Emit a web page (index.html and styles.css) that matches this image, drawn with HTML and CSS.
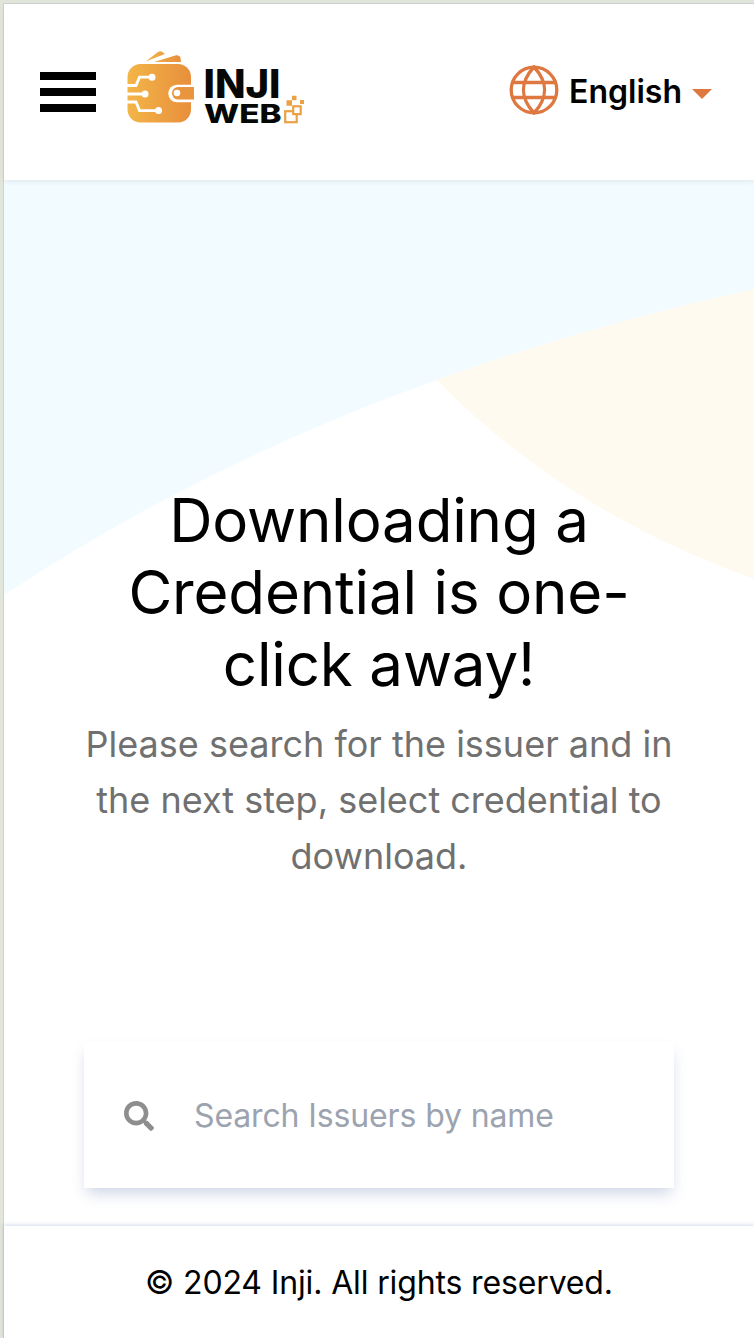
FILE: index.html
```html
<!DOCTYPE html>
<html lang="en">
<head>
<meta charset="utf-8">
<title>Inji Web</title>
<link rel="stylesheet" href="styles.css">
</head>
<body>
<div class="app">
  <header class="header">
    <button class="menu" aria-label="Menu"><span></span><span></span><span></span></button>
    <svg class="logo" width="180" height="84" viewBox="126 50 180 84" role="img" aria-label="Inji Web">
      <defs>
        <linearGradient id="wallet" x1="0" x2="1"><stop offset="0" stop-color="#f3b548"/><stop offset="1" stop-color="#e88f3c"/></linearGradient>
      </defs>
      <path d="M145.500 61.500 158 52q2-1.500 4-.3l3 2.300zM154 62l22-6.700q3.500-.7 4.500 2.500l.5 4.200z" fill="url(#wallet)"/>
      <rect x="127.500" y="64" width="63.500" height="58.500" rx="13" fill="url(#wallet)"/>
      <path d="M192 84.800h-15a8.700 8.700 0 0 0 0 17.500h15z" fill="#fff"/>
      <path d="M194 87v12.500h-16.500a6.300 6.300 0 0 1 0-12.500z" fill="#e9953d"/>
      <circle cx="177" cy="93" r="3.300" fill="#fff"/>
      <g fill="none" stroke="#fff" stroke-width="2.800">
        <path d="M127 85.500h9l3.500-8.300H151M127 94h17M127 102h9l3.500 8.600H157"/>
      </g>
      <g fill="#fff"><circle cx="152" cy="77.300" r="3.500"/><circle cx="145" cy="94" r="3.500"/><circle cx="158.500" cy="110.600" r="3.500"/></g>
      <g class="logo-word">
        <text x="203.500" y="98" font-size="40" textLength="77" lengthAdjust="spacingAndGlyphs">INJI</text>
        <text x="204" y="122.500" font-size="26" textLength="77.500" lengthAdjust="spacingAndGlyphs">WEB</text>
      </g>
      <path d="M292 95.800h4.500v4.500H292zM300 100h4v4h-4zM286.500 100.300h5.500v5.500h-5.500z" fill="#eca044"/>
      <g fill="#fff" stroke="#eca044" stroke-width="2.200"><rect x="285.200" y="111.200" width="11.500" height="11"/><rect x="293.200" y="106.300" width="7.500" height="7.800"/></g>
    </svg>
    <div class="language">
      <svg width="50" height="50" viewBox="0 0 50 50" fill="none" stroke="#de7840" stroke-width="3.300">
        <circle cx="25" cy="25" r="22.800"/><path d="M25 2C11 17 11 33 25 48C39 33 39 17 25 2zM3.500 17.500h43M3.500 32.500h43"/>
      </svg>
      <span class="language-name">English</span>
      <svg class="caret" width="20" height="10" viewBox="0 0 20 10"><path d="M0 0h20L10 10z" fill="#de7840"/></svg>
    </div>
  </header>
  <main class="main">
    <svg class="backdrop" width="750" height="420" viewBox="4 180 750 420" aria-hidden="true">
      <path d="M438.500 382Q567 512 754 579V240L430 370z" fill="#fffaf0"/>
      <path d="M4 180H754V289Q322 384 4 595z" fill="#f2fbff"/>
    </svg>
    <section class="intro">
      <h1>Downloading a Credential is one-click away!</h1>
      <p>Please search for the issuer and in the next step, select credential to download.</p>
    </section>
    <label class="search">
      <svg width="30" height="30" viewBox="0 0 512 512" fill="#8e8e8e"><path d="M505 442.700 405.300 343c-4.500-4.500-10.600-7-17-7H372c27.600-35.300 44-79.700 44-128C416 93.100 322.900 0 208 0S0 93.100 0 208s93.100 208 208 208c48.300 0 92.700-16.400 128-44v16.300c0 6.400 2.500 12.500 7 17l99.700 99.700c9.400 9.400 24.600 9.400 33.900 0l28.300-28.300c9.400-9.400 9.400-24.600.1-34zM208 336c-70.700 0-128-57.200-128-128 0-70.700 57.200-128 128-128 70.700 0 128 57.200 128 128 0 70.700-57.200 128-128 128z"/></svg>
      <input class="search-input" type="text" placeholder="Search Issuers by name">
    </label>
  </main>
  <footer class="footer">© 2024 Inji. All rights reserved.</footer>
</div>
</body>
</html>
```
FILE: styles.css
```css
* { box-sizing: border-box; }
body {
  margin: 0;
  height: 1338px;
  padding: 3px 0 0 3px;
  overflow: hidden;
  background: #e1e5da;
  font-family: Inter, "Liberation Sans", sans-serif;
}
.app {
  display: flex;
  flex-direction: column;
  height: 1335px;
  border: solid #d0d3d0;
  border-width: 1px 0 0 1px;
  background: #fff;
}
.header {
  display: flex;
  align-items: center;
  flex: none;
  height: 176px;
  padding: 0 42px 0 36px;
  background: #fff;
  box-shadow: 0 2px 5px rgba(0, 0, 0, .07);
  z-index: 1;
}
.menu {
  display: flex;
  flex-direction: column;
  gap: 8px;
  width: 56px;
  padding: 0;
  border: 0;
  background: none;
}
.menu span { height: 8px; background: #000; }
.logo { margin-left: 30px; overflow: visible; }
.logo-word { font-family: Inter, sans-serif; font-weight: 800; fill: #050807; }
.language { display: flex; align-items: center; gap: 10px; margin-left: auto; padding-bottom: 4px; }
.language-name { padding-top: 4px; font-size: 32px; font-weight: 600; line-height: 48px; }
.caret { margin-top: 7px; }
.main {
  display: flex;
  flex-direction: column;
  align-items: center;
  height: 1046px;
}
.backdrop { position: absolute; }
.intro {
  position: relative;
  width: 590px;
  margin-top: 304px;
  text-align: center;
}
h1 { margin: 0 30px 16px; font-size: 60px; font-weight: 400; line-height: 72px; letter-spacing: -.15px; }
p { margin: 0; color: #707070; font-size: 36px; line-height: 56px; }
.search {
  display: flex;
  align-items: center;
  gap: 40px;
  width: 590px;
  height: 146px;
  margin-top: 158px;
  padding: 2px 40px 0;
  background: #fff;
  box-shadow: 0 8px 14px -3px rgba(50, 85, 155, .25);
}
.search-input {
  flex: 1;
  min-width: 0;
  padding: 0;
  border: 0;
  background: none;
  font: 400 32px/48px Inter, sans-serif;
  letter-spacing: -.13px;
}
.search-input::placeholder { color: #9ca3af; opacity: 1; }
.footer {
  flex: 1;
  padding-top: 33px;
  background: #fff;
  box-shadow: 0 -1px 4px rgba(50, 80, 160, .22);
  font-size: 32px;
  line-height: 48px;
  letter-spacing: -.14px;
  text-align: center;
}
```
